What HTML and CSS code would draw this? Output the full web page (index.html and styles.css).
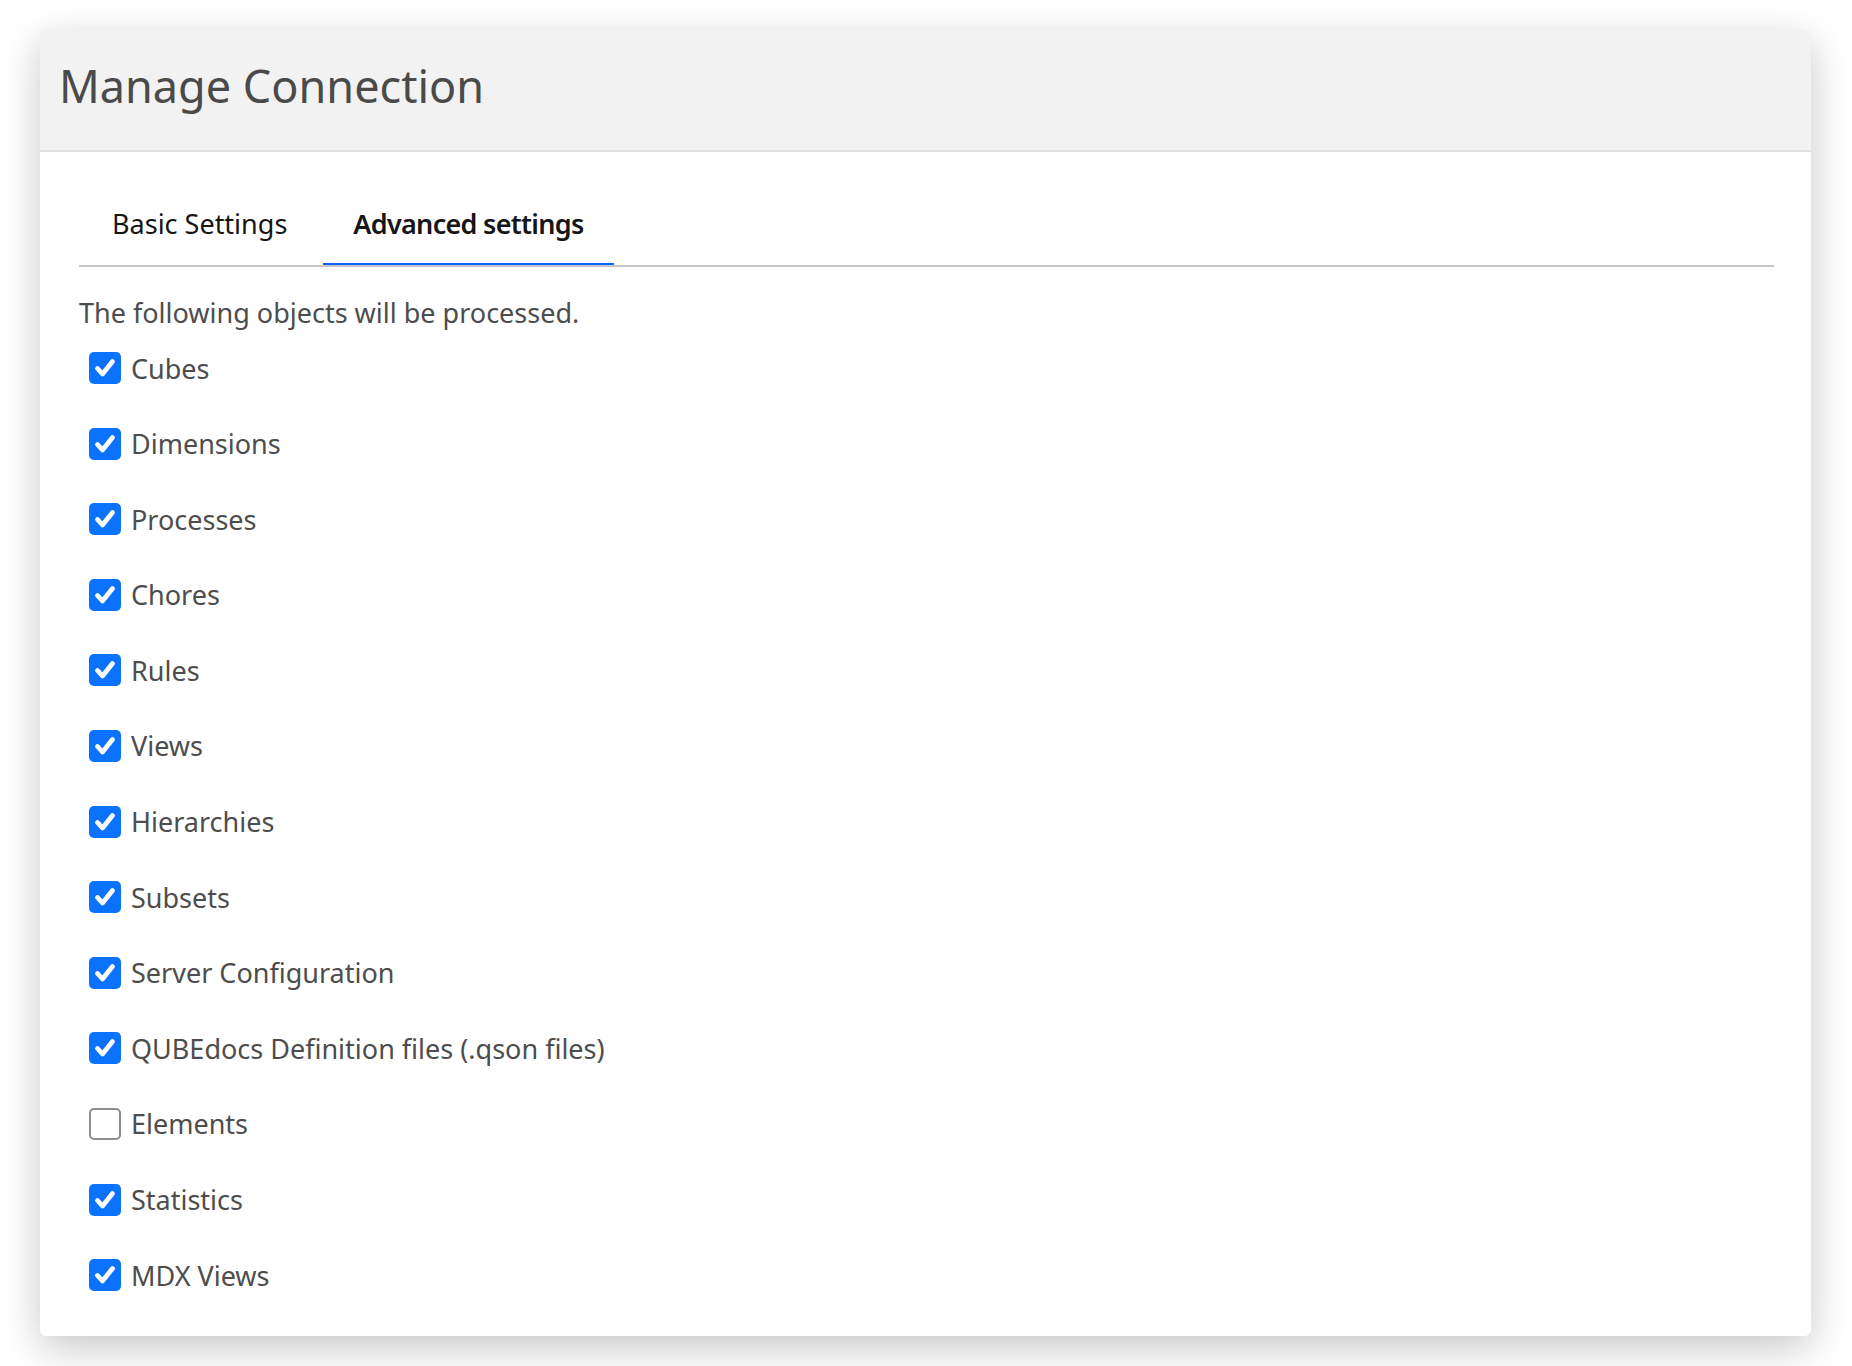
FILE: index.html
```html
<!DOCTYPE html>
<html lang="en">
<head>
    <meta charset="UTF-8">
    <meta name="viewport" content="width=device-width, initial-scale=1.0">
    <title>Manage Connection</title>
    <link rel="stylesheet" href="styles.css">
</head>
<body>
    <div class="modal">
        <div class="modal-header">
            <h1>Manage Connection</h1>
        </div>

        <div class="modal-body">
            <div class="tabs">
                <button class="tab">Basic Settings</button>
                <button class="tab active">Advanced settings</button>
            </div>

            <p class="intro">The following objects will be processed.</p>

            <ul class="object-list">
                <li><label class="check"><span class="box checked"><svg viewBox="0 0 32 32"><path d="M8.5 16.5 L13.5 22 L23.5 9.5"/></svg></span>Cubes</label></li>
                <li><label class="check"><span class="box checked"><svg viewBox="0 0 32 32"><path d="M8.5 16.5 L13.5 22 L23.5 9.5"/></svg></span>Dimensions</label></li>
                <li><label class="check"><span class="box checked"><svg viewBox="0 0 32 32"><path d="M8.5 16.5 L13.5 22 L23.5 9.5"/></svg></span>Processes</label></li>
                <li><label class="check"><span class="box checked"><svg viewBox="0 0 32 32"><path d="M8.5 16.5 L13.5 22 L23.5 9.5"/></svg></span>Chores</label></li>
                <li><label class="check"><span class="box checked"><svg viewBox="0 0 32 32"><path d="M8.5 16.5 L13.5 22 L23.5 9.5"/></svg></span>Rules</label></li>
                <li><label class="check"><span class="box checked"><svg viewBox="0 0 32 32"><path d="M8.5 16.5 L13.5 22 L23.5 9.5"/></svg></span>Views</label></li>
                <li><label class="check"><span class="box checked"><svg viewBox="0 0 32 32"><path d="M8.5 16.5 L13.5 22 L23.5 9.5"/></svg></span>Hierarchies</label></li>
                <li><label class="check"><span class="box checked"><svg viewBox="0 0 32 32"><path d="M8.5 16.5 L13.5 22 L23.5 9.5"/></svg></span>Subsets</label></li>
                <li><label class="check"><span class="box checked"><svg viewBox="0 0 32 32"><path d="M8.5 16.5 L13.5 22 L23.5 9.5"/></svg></span>Server Configuration</label></li>
                <li><label class="check"><span class="box checked"><svg viewBox="0 0 32 32"><path d="M8.5 16.5 L13.5 22 L23.5 9.5"/></svg></span>QUBEdocs Definition files (.qson files)</label></li>
                <li><label class="check"><span class="box"></span>Elements</label></li>
                <li><label class="check"><span class="box checked"><svg viewBox="0 0 32 32"><path d="M8.5 16.5 L13.5 22 L23.5 9.5"/></svg></span>Statistics</label></li>
                <li><label class="check"><span class="box checked"><svg viewBox="0 0 32 32"><path d="M8.5 16.5 L13.5 22 L23.5 9.5"/></svg></span>MDX Views</label></li>
            </ul>
        </div>
    </div>
</body>
</html>
```

FILE: styles.css
```css
body {
    margin: 0;
    padding: 30px 41px 31px 40px;
    background-color: #ffffff;
    font-family: "Noto Sans", "Open Sans", sans-serif;
    color: #4d4d4d;
}

.modal {
    background-color: #fff;
    border-radius: 6px;
    box-shadow: 0 12px 40px rgba(0, 0, 0, 0.22);
    overflow: hidden;
}

.modal-header {
    height: 122px;
    display: flex;
    align-items: center;
    padding: 0 19px 10px;
    box-sizing: border-box;
    background-color: #f2f2f2;
    border-bottom: 2px solid #e0e0e0;
}

.modal-header h1 {
    margin: 0;
    font-size: 45px;
    font-weight: 400;
    color: #4a4a4a;
}

.modal-body {
    padding: 29px 37px 45px 39px;
}

.tabs {
    display: flex;
    border-bottom: 2px solid #c6c6c6;
}

.tab {
    height: 84px;
    padding: 2px 36px 0 33px;
    font-family: inherit;
    font-size: 27px;
    color: #161616;
    background: none;
    border: none;
    border-bottom: 2px solid transparent;
    cursor: pointer;
}

.tab.active {
    padding: 2px 30px 0 30px;
    font-weight: 600;
    letter-spacing: -0.7px;
    border-bottom-color: #0f62fe;
}

.intro {
    margin: 28px 0 21px;
    font-size: 27px;
    line-height: 36px;
}

.object-list {
    list-style: none;
    margin: 0;
    padding: 0 0 0 10px;
    display: flex;
    flex-direction: column;
    gap: 43.6px;
}

.check {
    display: flex;
    align-items: center;
    gap: 10px;
    height: 32px;
    font-size: 27px;
    cursor: pointer;
}

.box {
    width: 32px;
    height: 32px;
    box-sizing: border-box;
    border: 2px solid #8d8d8d;
    border-radius: 5px;
    background-color: #fff;
    flex-shrink: 0;
}

.box.checked {
    border: none;
    background-color: #0b72fe;
}

.box svg {
    display: block;
    width: 32px;
    height: 32px;
    fill: none;
    stroke: #fff;
    stroke-width: 4.8;
    stroke-linecap: round;
    stroke-linejoin: round;
}
```
